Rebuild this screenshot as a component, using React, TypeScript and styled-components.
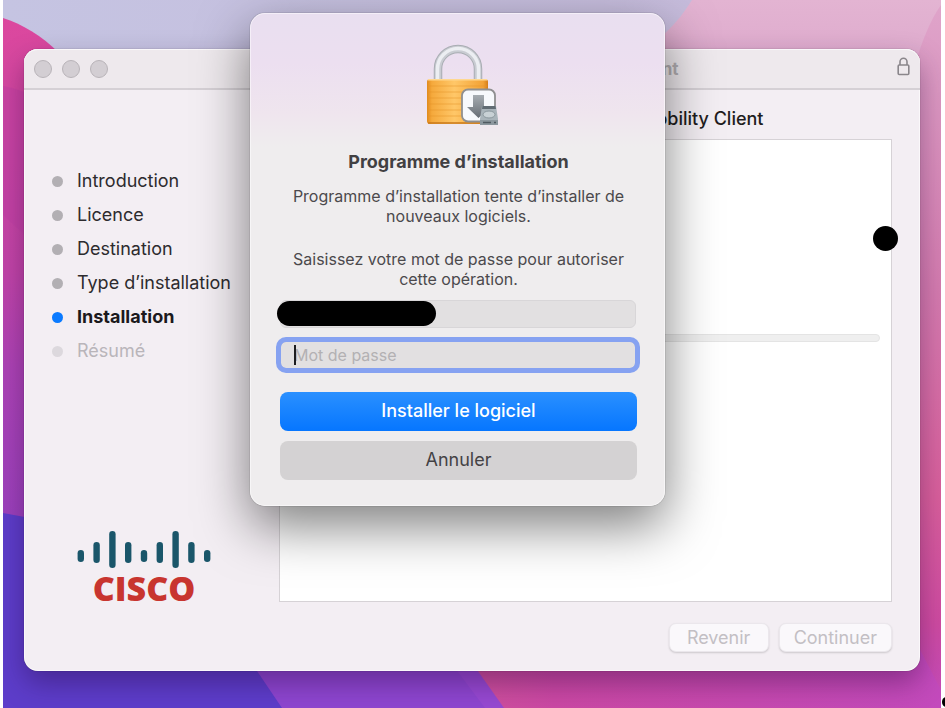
import React from "react";
import styled, { createGlobalStyle, css } from "styled-components";

const GlobalStyle = createGlobalStyle`
  *, *::before, *::after { box-sizing: border-box; }
  body {
    margin: 0;
    background: #ffffff;
    font-family: Inter, "Liberation Sans", sans-serif;
    color: #2b292c;
  }
  button, input { font-family: inherit; }
`;

const Page = styled.main`
  position: relative;
  min-height: 100vh;
  padding: 0 4px 0 3px;
  display: flex;
  overflow: hidden;
`;

const Desktop = styled.div`
  position: relative;
  flex: 1;
  display: flex;
  padding: 49px 21px 37px;
  overflow: hidden;
`;

const WallpaperSvg = styled.svg`
  position: absolute;
  inset: 0;
  width: 100%;
  height: 100%;
`;

const EdgeDot = styled.span`
  position: absolute;
  right: -5px;
  bottom: 1px;
  width: 8px;
  height: 10px;
  border-radius: 50%;
  background: #000;
`;

const Window = styled.section`
  position: relative;
  flex: 1;
  display: flex;
  flex-direction: column;
  border-radius: 14px;
  background: #f3eef3;
  box-shadow: 0 0 1px rgba(0, 0, 0, 0.6), 0 12px 28px rgba(30, 0, 50, 0.36),
    inset 0 0 0 1px rgba(255, 255, 255, 0.6);
`;

const TitleBar = styled.header`
  display: grid;
  grid-template-columns: 80px 1fr 80px;
  align-items: center;
  height: 41px;
  padding: 0 10px;
  border-bottom: 2px solid #d5d0d5;
  border-radius: 14px 14px 0 0;
  background: #eee9ed;
  box-shadow: inset 0 1px 0 #faf8fa;
`;

const Lights = styled.div`
  display: flex;
  gap: 10px;
`;

const Light = styled.button`
  width: 18px;
  height: 18px;
  padding: 0;
  border: 1px solid #b9b4b9;
  border-radius: 50%;
  background: #d3ced3;
`;

const WindowTitle = styled.h1`
  margin: 0;
  text-align: center;
  white-space: nowrap;
  font-size: 17px;
  line-height: 20px;
  font-weight: 700;
  color: #b3afb3;
`;

const LockSlot = styled.span`
  display: flex;
  justify-content: flex-end;
  padding-bottom: 4px;
`;

const Body = styled.div`
  flex: 1;
  display: grid;
  grid-template-columns: 255px 1fr;
`;

const Sidebar = styled.aside`
  display: flex;
  flex-direction: column;
  justify-content: space-between;
  padding: 74px 0 64px 28px;
`;

const Steps = styled.ol`
  margin: 0;
  padding: 0;
  list-style: none;
`;

type StepState = "done" | "current" | "pending";

const dotColor = { done: "#b2afb3", current: "#0a7aff", pending: "#dcd8dd" };
const stepColor = { done: "#2d2b2e", current: "#1b191c", pending: "#b9b5ba" };

const Step = styled.li<{ $state: StepState }>`
  display: flex;
  align-items: center;
  gap: 14px;
  height: 34px;
  font-size: 18px;
  line-height: 24px;
  font-weight: ${(p) => (p.$state === "current" ? 700 : 400)};
  color: ${(p) => stepColor[p.$state]};

  &::before {
    content: "";
    width: 11px;
    height: 11px;
    border-radius: 50%;
    background: ${(p) => dotColor[p.$state]};
  }
`;

const Brand = styled.div`
  display: flex;
  flex-direction: column;
  align-items: center;
  width: 134px;
  margin-left: 25px;
`;

const BrandName = styled.span`
  font-family: "Open Sans", sans-serif;
  font-weight: 800;
  font-size: 34px;
  line-height: 38px;
  color: #c8352f;
`;

const Content = styled.div`
  display: flex;
  flex-direction: column;
  padding: 17px 28px 19px 0;
`;

const Heading = styled.h2`
  margin: 0 0 8px 6px;
  white-space: nowrap;
  font-size: 18px;
  line-height: 24px;
  font-weight: 500;
  color: #1f1d20;
`;

const Panel = styled.div`
  position: relative;
  flex: 1;
  display: flex;
  flex-direction: column;
  padding: 194px 11px 0 22px;
  border: 1px solid #d6d2d6;
  background: #ffffff;
`;

const Progress = styled.div`
  height: 8px;
  border: 1px solid #e4e4e4;
  border-radius: 4px;
  background: #efefef;
`;

const PanelMark = styled.span`
  position: absolute;
  top: 86px;
  right: -7px;
  width: 25px;
  height: 25px;
  border-radius: 50%;
  background: #000;
`;

const Footer = styled.footer`
  display: flex;
  justify-content: flex-end;
  gap: 10px;
  padding-top: 21px;
`;

const NavButton = styled.button`
  min-width: 100px;
  height: 29px;
  padding: 0 14px;
  border: 1px solid #ebe7ec;
  border-radius: 7px;
  background: #faf8fb;
  box-shadow: 0 1px 2px rgba(0, 0, 0, 0.16);
  font-size: 18px;
  line-height: 24px;
  color: #c3bfc4;
`;

const Sheet = styled.form`
  position: absolute;
  top: -36px;
  left: 226px;
  width: 415px;
  display: flex;
  flex-direction: column;
  align-items: stretch;
  padding: 27px 28px 26px 30px;
  border-radius: 15px;
  background: linear-gradient(#e9dff0 0, #ecdff0 50px, #efe5ee 100px, #efedee 134px);
  box-shadow: 0 0 1px rgba(0, 0, 0, 0.7), 0 20px 52px rgba(0, 0, 0, 0.5),
    inset 0 0 0 1px rgba(255, 255, 255, 0.5);
  text-align: center;
`;

const SheetIcon = styled.svg`
  align-self: center;
  margin-left: 8px;
`;

const SheetTitle = styled.h3`
  margin: 22px 0 12px;
  font-size: 18px;
  line-height: 24px;
  font-weight: 700;
  color: #414042;
`;

const SheetText = styled.p`
  margin: 0 0 23px;
  font-size: 16px;
  line-height: 20px;
  color: #4b494c;

  & + & { margin-bottom: 11px; }
`;

const fieldBase = css`
  width: 100%;
  border: 1px solid #d8d6d8;
  border-radius: 6px;
  background: #e2e0e1;
  font-size: 16px;
  line-height: 20px;
`;

const UserField = styled.div`
  position: relative;
  height: 28px;
  margin-right: 1px;
  display: flex;
`;

const UserInput = styled.input`
  ${fieldBase}
  padding: 0 12px;
`;

const Redaction = styled.span`
  position: absolute;
  top: 1px;
  left: -3px;
  width: 159px;
  height: 25px;
  border-radius: 13px;
  background: #000;
`;

const PasswordField = styled.label`
  position: relative;
  display: flex;
  height: 28px;
  margin: 13px 1px 23px 0;
`;

const PasswordInput = styled.input`
  ${fieldBase}
  padding: 0 13px;
  border-color: #a9b4d8;
  outline: 5px solid #86a2f1;
  outline-offset: -1px;

  &::placeholder { color: #b3b1b3; opacity: 1; }
`;

const Caret = styled.span`
  position: absolute;
  left: 14px;
  top: 4px;
  width: 2px;
  height: 20px;
  background: #1d1d1f;
`;

const SheetButton = styled.button<{ $primary?: boolean }>`
  height: 39px;
  padding: 0 0 2px;
  border: 0;
  border-radius: 8px;
  font-size: 18px;
  line-height: 24px;
  ${(p) =>
    p.$primary
      ? css`
          background: linear-gradient(#2a90ff, #0676ff);
          color: #ffffff;
          font-weight: 500;
        `
      : css`
          margin-top: 10px;
          background: #d4d2d3;
          color: #444245;
        `}
`;

const Wallpaper = () => (
  <WallpaperSvg viewBox="3 0 938 708" preserveAspectRatio="none" aria-hidden="true">
    <defs>
      <linearGradient id="sky" x1="0" y1="0" x2="1" y2="0">
        <stop offset="0" stopColor="#c5c4e2" />
        <stop offset="1" stopColor="#c7b9da" />
      </linearGradient>
      <linearGradient id="rose" x1="0" y1="0" x2="0" y2="1">
        <stop offset="0" stopColor="#e3b4d2" />
        <stop offset="0.12" stopColor="#dca6cb" />
        <stop offset="1" stopColor="#c94d99" />
      </linearGradient>
      <linearGradient id="east" x1="0" y1="0" x2="0" y2="1">
        <stop offset="0" stopColor="#dfa4ca" />
        <stop offset="0.4" stopColor="#d57cb0" />
        <stop offset="0.7" stopColor="#d95f9c" />
        <stop offset="0.88" stopColor="#cf4ba2" />
        <stop offset="1" stopColor="#c34abc" />
      </linearGradient>
      <linearGradient id="west" gradientUnits="userSpaceOnUse" x1="0" y1="18" x2="0" y2="520">
        <stop offset="0" stopColor="#dc489e" />
        <stop offset="0.5" stopColor="#c244a8" />
        <stop offset="0.7" stopColor="#ad43b6" />
        <stop offset="1" stopColor="#9c41bd" />
      </linearGradient>
      <linearGradient id="south" x1="0" y1="0" x2="1" y2="0">
        <stop offset="0" stopColor="#d0529a" />
        <stop offset="0.2" stopColor="#cb48a4" />
        <stop offset="1" stopColor="#c34abc" />
      </linearGradient>
    </defs>
    <rect x="3" width="938" height="708" fill="url(#sky)" />
    <path d="M692 0C682 16 672 28 655 42V708H941V0Z" fill="url(#rose)" />
    <path d="M941 5C930 20 922 42 915 64V708H941Z" fill="url(#east)" />
    <path d="M3 18C22 24 42 36 58 52V560H3Z" fill="url(#west)" />
    <path d="M3 86Q14 88 30 94V240L3 215Z" fill="#bf3fa6" opacity="0.4" />
    <path d="M457 640H915L941 690V708H457Z" fill="url(#south)" />
    <path d="M200 640H456L504 708H200Z" fill="#9749d2" />
    <path d="M200 640H434L485 708H200Z" fill="#8e46d0" />
    <path d="M3 513L30 518L236 640L282 708H3Z" fill="#5d3dca" />
  </WallpaperSvg>
);

const PadlockOutline = () => (
  <svg width="13" height="19" viewBox="0 0 13 19" fill="none" stroke="#8a868b" strokeWidth="1.6" aria-hidden="true">
    <rect x="1.2" y="8" width="10.600" height="9.500" rx="1" />
    <path d="M3 8V4.800a3.500 3.500 0 0 1 7 0V8" />
  </svg>
);

const barHeights = [12, 21, 37, 21, 12, 21, 37, 21, 12];
const barTops = [19, 11, 0, 11, 19, 11, 0, 11, 19];

const BrandBars = () => (
  <svg width="134" height="38" viewBox="0 0 134 38" fill="#1a566a" aria-hidden="true">
    {barHeights.map((h, i) => (
      <rect key={i} x={i * 15.8 + 0.6} y={barTops[i]} width="6.4" height={h} rx="3.2" />
    ))}
  </svg>
);

const InstallerLock = () => (
  <SheetIcon width="76" height="88" viewBox="0 0 76 88" aria-hidden="true">
    <defs>
      <linearGradient id="brass" x1="0" y1="0" x2="1" y2="0">
        <stop offset="0" stopColor="#e08a1c" />
        <stop offset="0.08" stopColor="#f5a93c" />
        <stop offset="0.45" stopColor="#ffc768" />
        <stop offset="0.92" stopColor="#f3a235" />
        <stop offset="1" stopColor="#d57d17" />
      </linearGradient>
      <linearGradient id="arrow" x1="0" y1="0" x2="0" y2="1">
        <stop offset="0" stopColor="#a7adb2" />
        <stop offset="1" stopColor="#666d74" />
      </linearGradient>
    </defs>
    <path d="M13 41V29a20 20 0 0 1 40 0V41" fill="none" stroke="#a9adb3" strokeWidth="8.500" />
    <path d="M13 41V29a20 20 0 0 1 40 0V41" fill="none" stroke="#c9ccd2" strokeWidth="6.500" />
    <path d="M12.500 41V29a20.500 20.500 0 0 1 41 0V41" fill="none" stroke="#eceef2" strokeWidth="3.500" />
    <rect x="2" y="39" width="61" height="45" rx="3" fill="url(#brass)" />
    <path d="M3 39.800H62" stroke="#ffd890" strokeWidth="1.500" />
    <path d="M3 46H62M3 52H62M3 58H62M3 64H62M3 70H62M3 76H62" stroke="#e59428" strokeWidth="1.200" opacity="0.5" />
    <path d="M3 83H62" stroke="#c8781b" strokeWidth="1.500" />
    <rect x="37" y="49.500" width="33" height="32" rx="6" fill="#f7f9fc" stroke="#8f8f90" strokeWidth="1.800" />
    <path d="M48 55H59V67H65L53.500 78L42 67H48Z" fill="url(#arrow)" />
    <path d="M57 66H71L73 79V85H55V79Z" fill="#a9b4ba" />
    <path d="M57.500 66H70.500L71 69H57Z" fill="#616c73" />
    <path d="M55 80H73V85H55Z" fill="#8b979d" />
    <ellipse cx="64" cy="74.500" rx="6" ry="3.500" fill="#c8d1d5" stroke="#8b979d" />
    <path d="M58 82.500H66M69 82.500H71" stroke="#4f5a61" strokeWidth="1.500" />
  </SheetIcon>
);

const steps: { label: string; state: StepState }[] = [
  { label: "Introduction", state: "done" },
  { label: "Licence", state: "done" },
  { label: "Destination", state: "done" },
  { label: "Type d’installation", state: "done" },
  { label: "Installation", state: "current" },
  { label: "Résumé", state: "pending" },
];

export default function App() {
  return (
    <>
      <GlobalStyle />
      <Page>
        <Desktop>
          <Wallpaper />
          <Window>
            <TitleBar>
              <Lights>
                <Light type="button" aria-label="Fermer" />
                <Light type="button" aria-label="Réduire" />
                <Light type="button" aria-label="Agrandir" />
              </Lights>
              <WindowTitle>Installer Cisco AnyConnect Secure Mobility Client</WindowTitle>
              <LockSlot>
                <PadlockOutline />
              </LockSlot>
            </TitleBar>
            <Body>
              <Sidebar>
                <Steps>
                  {steps.map((s) => (
                    <Step key={s.label} $state={s.state}>
                      {s.label}
                    </Step>
                  ))}
                </Steps>
                <Brand>
                  <BrandBars />
                  <BrandName>CISCO</BrandName>
                </Brand>
              </Sidebar>
              <Content>
                <Heading>Installation de Cisco AnyConnect Secure Mobility Client</Heading>
                <Panel>
                  <Progress role="progressbar" aria-label="Installation" />
                  <PanelMark />
                </Panel>
                <Footer>
                  <NavButton type="button" disabled>Revenir</NavButton>
                  <NavButton type="button" disabled>Continuer</NavButton>
                </Footer>
              </Content>
            </Body>
            <Sheet onSubmit={(e) => e.preventDefault()}>
              <InstallerLock />
              <SheetTitle>Programme d’installation</SheetTitle>
              <SheetText>Programme d’installation tente d’installer de nouveaux logiciels.</SheetText>
              <SheetText>Saisissez votre mot de passe pour autoriser cette opération.</SheetText>
              <UserField>
                <UserInput type="text" aria-label="Nom d’utilisateur" />
                <Redaction />
              </UserField>
              <PasswordField>
                <PasswordInput type="password" aria-label="Mot de passe" placeholder="Mot de passe" />
                <Caret />
              </PasswordField>
              <SheetButton type="submit" $primary>Installer le logiciel</SheetButton>
              <SheetButton type="button">Annuler</SheetButton>
            </Sheet>
          </Window>
        </Desktop>
        <EdgeDot />
      </Page>
    </>
  );
}
